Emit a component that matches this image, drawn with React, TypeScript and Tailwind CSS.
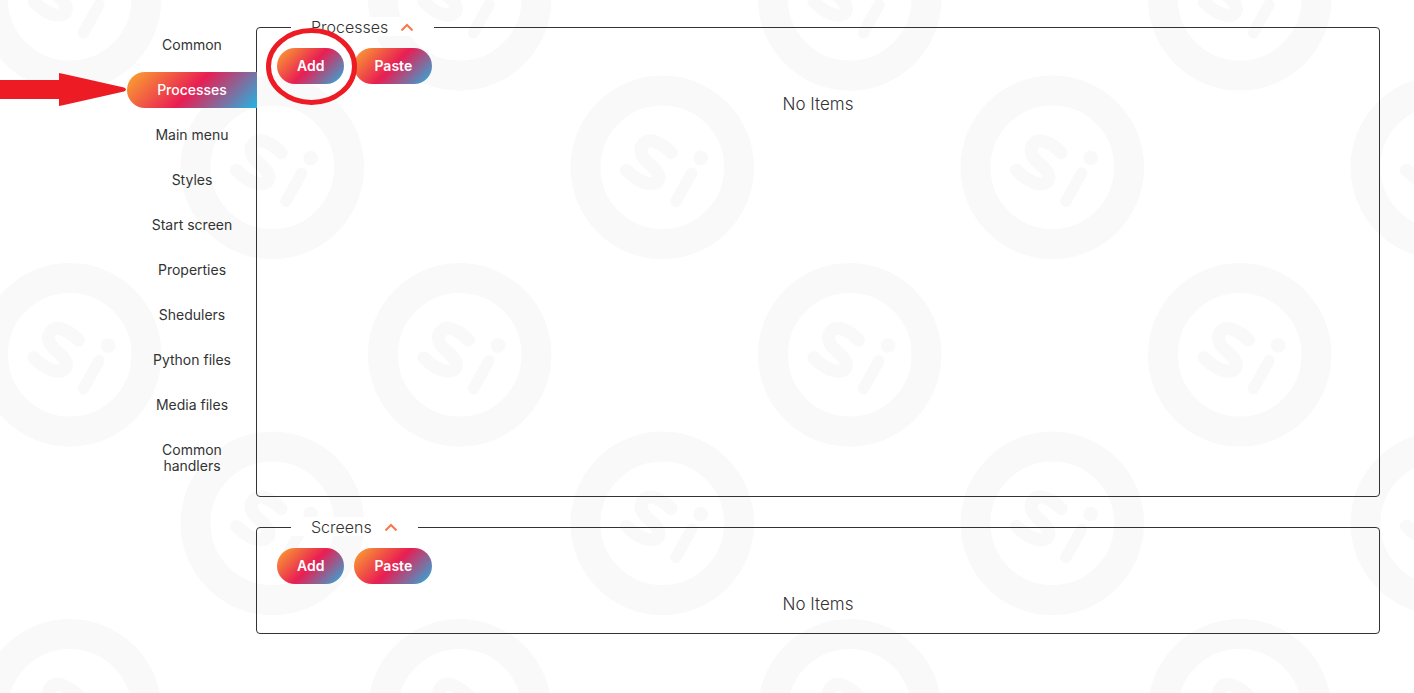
import { useState, type ReactNode } from 'react';
import clsx from 'clsx';

const SECTIONS = [
  'Common',
  'Processes',
  'Main menu',
  'Styles',
  'Start screen',
  'Properties',
  'Shedulers',
  'Python files',
  'Media files',
  'Common handlers',
];

/* One "Si" coin, centred on the origin. */
function Coin() {
  return (
    <g fill="none" stroke="#f9f9f9" strokeLinecap="round" strokeLinejoin="round">
      <circle r="76.8" strokeWidth="30" />
      <path
        d="M8.800 -14.600 C5 -19 -1 -23.500 -8 -26 C-17 -28.500 -24 -21 -20 -12 C-17.500 -6.500 -12 -3.500 -8 1 C-4.500 5 -2 9.500 -4 13 C-7 17.500 -14 16.800 -19 14.800 C-26 12 -31 8 -35.800 3"
        strokeWidth="13"
      />
      <path d="M29.300 6 L13.700 34" strokeWidth="11.5" />
      <circle cx="38.400" cy="-9.300" r="7.300" fill="#f9f9f9" stroke="none" />
    </g>
  );
}

/* Coins taller than the tile's free space are drawn again one tile up, so the seam stays closed. */
function Backdrop() {
  return (
    <svg className="absolute inset-0 -z-10 h-full w-full" aria-hidden="true">
      <defs>
        <pattern id="coins" width="390" height="356" patternUnits="userSpaceOnUse" x="-24" y="70">
          <g transform="translate(296.300 97.300)">
            <Coin />
          </g>
          <g transform="translate(93.700 284.800)">
            <Coin />
          </g>
          <g transform="translate(93.700 -71.200)">
            <Coin />
          </g>
        </pattern>
      </defs>
      <rect width="100%" height="100%" fill="url(#coins)" />
    </svg>
  );
}

function ArrowMark() {
  return (
    <svg
      className="pointer-events-none absolute top-0 right-full"
      width="127"
      height="36"
      viewBox="0 0 127 36"
      aria-hidden="true"
    >
      <path d="M0 8 H59 V1 L64 2 L124 15.500 Q128 17.500 124 19.500 L64 33 L59 34 V27 H0 Z" fill="#ed1c24" />
    </svg>
  );
}

function CircleMark() {
  return (
    <svg
      className="pointer-events-none absolute top-1/2 left-1/2 z-10 -translate-x-1/2 -translate-y-1/2"
      width="92"
      height="78"
      viewBox="0 0 92 78"
      aria-hidden="true"
    >
      <ellipse cx="46.500" cy="39.500" rx="43" ry="36" fill="none" stroke="#ed1c24" strokeWidth="5" />
    </svg>
  );
}

function PillButton({ children }: { children: ReactNode }) {
  return (
    <button
      type="button"
      className="h-9 rounded-full bg-[linear-gradient(135deg,#fba82f,#e91e53_50%,#1fb6e4)] px-5 text-sm font-semibold text-white"
    >
      {children}
    </button>
  );
}

function Panel({ title, className, marked }: { title: string; className?: string; marked?: boolean }) {
  const [open, setOpen] = useState(true);
  return (
    <fieldset className={clsx('min-w-0 rounded border border-[#333] px-5 pb-[19px]', className)}>
      <legend className="ml-3.5 h-[21px] px-5">
        <button
          type="button"
          aria-expanded={open}
          onClick={() => setOpen(!open)}
          className="-mx-5 flex h-[19px] items-center gap-3 bg-white px-5 text-base leading-4 font-light text-[#333]"
        >
          {title}
          <svg className={clsx(!open && 'rotate-180')} width="14" height="9" viewBox="0 0 14 9" aria-hidden="true">
            <path d="M1.500 8.500 L7 3 L12.500 8.500" fill="none" stroke="#f9764a" strokeWidth="2" />
          </svg>
        </button>
      </legend>
      {open && (
        <>
          <div className="mt-2.5 flex gap-2.5">
            <div className="relative flex">
              <PillButton>Add</PillButton>
              {marked && <CircleMark />}
            </div>
            <PillButton>Paste</PillButton>
          </div>
          <p className="mt-2.5 text-center text-[17px] leading-5 font-light text-[#333]">No Items</p>
        </>
      )}
    </fieldset>
  );
}

export default function App() {
  const [active, setActive] = useState('Processes');
  return (
    <div className="relative isolate flex min-h-screen overflow-hidden bg-white pr-[34px] pl-[127px] font-[Inter,'Open_Sans',sans-serif] text-[#333]">
      <Backdrop />
      <nav className="z-10 flex w-[130px] shrink-0 flex-col gap-[9px] pt-[27px]">
        {SECTIONS.map((name) => (
          <div key={name} className="relative flex">
            <button
              type="button"
              onClick={() => setActive(name)}
              className={clsx(
                'w-full rounded-l-full px-5 py-2.5 text-center text-sm leading-4',
                active === name &&
                  'bg-[linear-gradient(135deg,#fba82f,#e91e53_50%,#1fb6e4)] font-medium text-white',
              )}
            >
              {name}
            </button>
            {name === 'Processes' && <ArrowMark />}
          </div>
        ))}
      </nav>
      <main className="-ml-px flex min-w-0 flex-1 flex-col gap-5 pt-[17px]">
        <Panel title="Processes" className="min-h-[480px]" marked />
        <Panel title="Screens" />
      </main>
    </div>
  );
}
